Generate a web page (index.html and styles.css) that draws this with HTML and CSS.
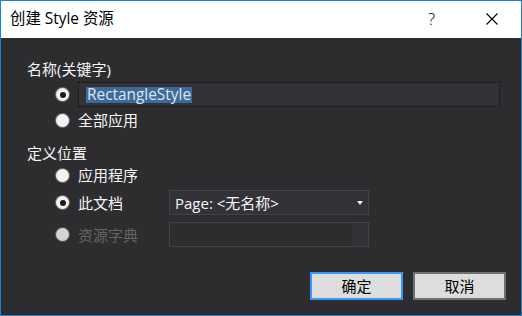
FILE: index.html
```html
<!DOCTYPE html>
<html lang="zh-CN">
<head>
<meta charset="utf-8">
<title>创建 Style 资源</title>
<link rel="stylesheet" href="styles.css">
</head>
<body>
<div class="window">
  <div class="titlebar">
    <span class="title">创建 Style 资源</span>
    <span class="help">?</span>
    <span class="close">
      <svg width="12" height="12" viewBox="0 0 12 12"><path d="M0.5 0.5 L11.5 11.5 M11.5 0.5 L0.5 11.5" stroke="#000" stroke-width="1.1" fill="none"/></svg>
    </span>
  </div>
  <div class="content">
    <div class="label label-name">名称(关键字)</div>
    <div class="row row-key">
      <span class="radio checked"></span>
      <div class="textbox dotted"><span class="sel">RectangleStyle</span></div>
    </div>
    <div class="row row-all">
      <span class="radio"></span>
      <span class="opt">全部应用</span>
    </div>
    <div class="label label-loc">定义位置</div>
    <div class="row row-app">
      <span class="radio"></span>
      <span class="opt">应用程序</span>
    </div>
    <div class="row row-doc">
      <span class="radio checked"></span>
      <span class="opt opt-col">此文档</span>
      <div class="combo">
        <span class="combo-text">Page: &lt;无名称&gt;</span>
        <span class="arrow"></span>
      </div>
    </div>
    <div class="row row-dict">
      <span class="radio disabled"></span>
      <span class="opt opt-col disabled-text">资源字典</span>
      <div class="dictbox"><span class="dictbox-side"></span></div>
    </div>
    <div class="buttons">
      <button class="btn default">确定</button>
      <button class="btn">取消</button>
    </div>
  </div>
</div>
</body>
</html>
```
FILE: styles.css
```css
html, body {
  margin: 0;
  padding: 0;
  background: #2d2d30;
}
body {
  width: 522px;
  height: 316px;
  overflow: hidden;
  font-family: "Open Sans", "Noto Sans CJK SC", sans-serif;
  font-size: 15px;
}
.window {
  box-sizing: border-box;
  width: 522px;
  height: 316px;
  border: 1px solid #1883d7;
  display: flex;
  flex-direction: column;
}
.titlebar {
  height: 37px;
  background: #ffffff;
  display: flex;
  align-items: center;
  padding-left: 9px;
  color: #000;
}
.title {
  flex: 1;
  line-height: 20px;
  margin-top: -1px;
  font-size: 15.4px;
}
.help {
  font-size: 17px;
  font-weight: 300;
  line-height: 20px;
  margin-top: -1px;
  width: 10px;
  margin-right: 48px;
}
.close {
  display: flex;
  width: 12px;
  height: 12px;
  margin-right: 23px;
  margin-top: -1px;
}
.content {
  flex: 1;
  background: #2d2d30;
  color: #f6f6f6;
  padding-left: 26px;
  padding-right: 15px;
  display: flex;
  flex-direction: column;
}
.label {
  height: 20px;
  line-height: 20px;
}
.label-name { margin-top: 21px; }
.label-loc { margin-top: 13px; }
.row {
  display: flex;
  align-items: center;
  padding-left: 29px;
}
.row-key { margin-top: 3px; height: 25px; }
.row-all { margin-top: 3px; height: 20px; }
.row-app { margin-top: 2px; height: 20px; }
.row-doc { margin-top: 5px; height: 25px; }
.row-dict { margin-top: 7px; height: 25px; }
.radio {
  box-sizing: border-box;
  width: 13px;
  height: 13px;
  border-radius: 50%;
  background: #f4f4f4;
  box-shadow: 0 0 0 1px #6a6a6a;
  margin-right: 9px;
  display: flex;
  align-items: center;
  justify-content: center;
  flex: none;
}
.radio.checked::after {
  content: "";
  width: 6px;
  height: 6px;
  border-radius: 50%;
  background: #1b1b1b;
}
.radio.disabled {
  background: #d4d4d4;
  box-shadow: 0 0 0 1px #5a5a5a;
}
.opt {
  line-height: 20px;
}
.opt-col {
  width: 91px;
  flex: none;
}
.disabled-text {
  color: #656565;
}
.textbox {
  box-sizing: border-box;
  height: 25px;
  width: 422px;
  display: flex;
  align-items: center;
  padding-left: 7px;
}
.dotted {
  border: 1px dotted #0a0a0a;
  background: #333337;
}
.sel {
  background: #3e6a9a;
  color: #dde6f0;
  line-height: 16px;
  padding: 0 1px;
  font-size: 15.4px;
}
.combo {
  box-sizing: border-box;
  width: 200px;
  height: 25px;
  border: 1px solid #434346;
  background: #333337;
  display: flex;
  align-items: center;
  padding-left: 5px;
  padding-right: 5px;
}
.combo-text {
  flex: 1;
  line-height: 20px;
  color: #f6f6f6;
}
.arrow {
  width: 0;
  height: 0;
  border-left: 3.5px solid transparent;
  border-right: 3.5px solid transparent;
  border-top: 4px solid #f1f1f1;
}
.dictbox {
  box-sizing: border-box;
  width: 200px;
  height: 25px;
  border: 1px solid #434346;
  background: #2d2d30;
  display: flex;
  justify-content: flex-end;
}
.dictbox-side {
  width: 16px;
  background: #333337;
}
.buttons {
  display: flex;
  justify-content: flex-end;
  gap: 10px;
  margin-top: 25px;
}
.btn {
  box-sizing: border-box;
  width: 93px;
  height: 28px;
  background: #dddddd;
  border: 2px solid #707070;
  font-family: "Open Sans", "Noto Sans CJK SC", sans-serif;
  font-size: 15px;
  color: #000;
  padding: 0;
  line-height: 20px;
}
.btn.default {
  border-color: #3399ff;
}
```
